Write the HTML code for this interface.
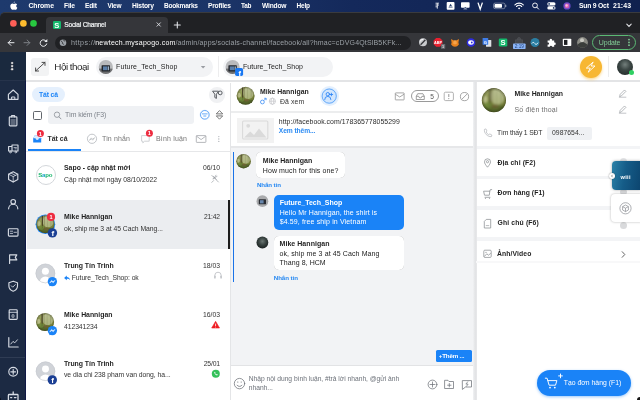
<!DOCTYPE html>
<html><head><meta charset="utf-8"><title>Social Channel</title>
<style>
*{box-sizing:border-box;margin:0;padding:0}
html,body{width:640px;height:400px;overflow:hidden;background:#fff}
body{font-family:"Liberation Sans","DejaVu Sans",sans-serif;position:relative;color:#222}
.a{position:absolute}
.t{position:absolute;white-space:nowrap;line-height:1;font-size:7px}
#root{position:absolute;left:0;top:0;width:640px;height:400px;overflow:hidden;will-change:transform}
svg{position:absolute;left:0;top:0;overflow:visible}
svg text{font-family:"Liberation Sans","DejaVu Sans",sans-serif}
</style></head><body><div id="root">
<div class="a" style="left:0px;top:0px;width:640px;height:18px;background:linear-gradient(90deg,#1e3a6d 0,#1b3467 35%,#14295b 55%,#10214f 100%)"></div>
<div class="a" style="left:0px;top:11.7px;width:640px;height:21.3px;background:#202124;border-top-left-radius:5px;border-top:.6px solid #3a3b3e"></div>
<div class="a" style="left:46px;top:16.5px;width:122px;height:17px;background:#35363a;border-radius:4px 4px 0 0"></div>
<div class="a" style="left:0px;top:33px;width:640px;height:19px;background:#35363a"></div>
<div class="a" style="left:55px;top:36px;width:355.5px;height:13.5px;background:#202124;border-radius:7px"></div>
<div class="t" style="left:28.5px;top:2px;font-size:6.90px;line-height:7px;color:#fff;font-weight:bold;letter-spacing:-0.114px;">Chrome</div>
<div class="t" style="left:64px;top:2px;font-size:6.75px;line-height:7px;color:#fff;font-weight:bold;letter-spacing:-0.207px;">File</div>
<div class="t" style="left:85px;top:2px;font-size:6.68px;line-height:7px;color:#fff;font-weight:bold;letter-spacing:-0.207px;">Edit</div>
<div class="t" style="left:107.5px;top:2px;font-size:6.47px;line-height:7px;color:#fff;font-weight:bold;letter-spacing:-0.207px;">View</div>
<div class="t" style="left:132px;top:2px;font-size:6.75px;line-height:7px;color:#fff;font-weight:bold;letter-spacing:-0.207px;">History</div>
<div class="t" style="left:164px;top:2px;font-size:6.55px;line-height:7px;color:#fff;font-weight:bold;letter-spacing:-0.207px;">Bookmarks</div>
<div class="t" style="left:208px;top:2px;font-size:6.67px;line-height:7px;color:#fff;font-weight:bold;letter-spacing:-0.207px;">Profiles</div>
<div class="t" style="left:241px;top:2px;font-size:6.41px;line-height:7px;color:#fff;font-weight:bold;letter-spacing:-0.207px;">Tab</div>
<div class="t" style="left:262px;top:2px;font-size:6.68px;line-height:7px;color:#fff;font-weight:bold;letter-spacing:-0.207px;">Window</div>
<div class="t" style="left:296.5px;top:2px;font-size:6.52px;line-height:7px;color:#fff;font-weight:bold;letter-spacing:-0.207px;">Help</div>
<div class="t" style="left:579px;top:2px;font-size:6.78px;line-height:7px;color:#fff;font-weight:bold;letter-spacing:-0.207px;">Sun 9 Oct</div>
<div class="t" style="left:613px;top:2px;font-size:6.90px;line-height:7px;color:#fff;font-weight:bold;letter-spacing:0.088px;">21:43</div>
<div class="a" style="left:52.5px;top:21px;width:8.5px;height:8.2px;background:#14b86c;border-radius:1.2px"></div>
<div class="t" style="left:54.2px;top:21px;font-size:7.60px;line-height:9px;color:#fff;font-weight:bold;">S</div>
<div class="t" style="left:64.3px;top:21px;font-size:6.58px;line-height:7px;color:#f1f3f4;letter-spacing:-0.198px;-webkit-text-stroke:.2px #f1f3f4;">Social Channel</div>
<div class="t" style="left:71px;top:39px;font-size:7.16px;line-height:8px;color:#9aa0a6;letter-spacing:0.385px;">https://</div>
<div class="t" style="left:95.2px;top:39px;font-size:7.00px;line-height:7px;color:#fff;letter-spacing:0.248px;">newtech.mysapogo.com</div>
<div class="t" style="left:175.4px;top:39px;font-size:7.00px;line-height:7px;color:#9aa0a6;letter-spacing:0.167px;">/admin/apps/socials-channel/facebook/all?hmac=cDVG4QtSlB5KFk...</div>
<div class="a" style="left:591.8px;top:35px;width:44.7px;height:14.5px;border:1px solid #5bb974;border-radius:7.5px"></div>
<div class="t" style="left:598.8px;top:39px;font-size:7.00px;line-height:7px;color:#81c995;letter-spacing:-0.175px;">Update</div>
<div class="a" style="left:0px;top:52px;width:25.8px;height:348px;background:#1c2a43"></div>
<div class="a" style="left:0px;top:52px;width:25.8px;height:28.5px;background:#1a293e"></div>
<div class="a" style="left:24.6px;top:81px;width:1.2px;height:319px;background:#0f1845"></div>
<div class="a" style="left:0px;top:80.3px;width:24.5px;height:1px;background:#26334b"></div>
<div class="a" style="left:0px;top:357px;width:24.5px;height:1px;background:#2f3c54"></div>
<div class="a" style="left:25.8px;top:80.4px;width:614.2px;height:2px;background:#e3e4e6"></div>
<div class="a" style="left:31px;top:58px;width:17.5px;height:17.5px;background:#f2f3f4;border-radius:3px"></div>
<div class="t" style="left:54.3px;top:61px;font-size:9.90px;line-height:11px;color:#2b2b2b;letter-spacing:-0.500px;">Hội thoại</div>
<div class="a" style="left:95.5px;top:56.7px;width:117.5px;height:20.3px;background:#f2f3f5;border-radius:10.2px"></div>
<div class="t" style="left:116px;top:63px;font-size:7.00px;line-height:7px;color:#1d1d1d;letter-spacing:0.156px;">Future_Tech_Shop</div>
<div class="a" style="left:218px;top:56px;width:1px;height:21px;background:#ededee"></div>
<div class="a" style="left:222.5px;top:56.7px;width:110px;height:20.3px;background:#f2f3f5;border-radius:10.2px"></div>
<div class="t" style="left:243px;top:63px;font-size:7.00px;line-height:7px;color:#1d1d1d;letter-spacing:0.056px;">Future_Tech_Shop</div>
<div class="a" style="left:579.6px;top:55.75px;width:22px;height:22px;border-radius:50%;background:#f7b733;box-shadow:0 1.5px 3px rgba(248,184,48,.55)"></div>
<div class="a" style="left:608.3px;top:56px;width:1px;height:21px;background:#ececec"></div>
<div class="a" style="left:617px;top:59px;width:16px;height:16px;border-radius:50%;background:radial-gradient(circle at 50% 35%,#737f7c 0,#3c4745 40%,#1c2322 100%)"></div>
<div class="a" style="left:629.4px;top:70.1px;width:5px;height:5px;border-radius:50%;background:#2fd062"></div>
<div class="a" style="left:229.9px;top:83px;width:1.3px;height:317px;background:#e4e5e7"></div>
<div class="a" style="left:32px;top:87px;width:32.5px;height:15px;background:#e5f0fd;border-radius:7.5px"></div>
<div class="t" style="left:39px;top:91px;font-size:6.80px;line-height:7px;color:#1a83f7;font-weight:bold;letter-spacing:-0.131px;">Tất cả</div>
<div class="a" style="left:209.1px;top:87px;width:15.6px;height:15.6px;border-radius:50%;background:#f0f1f3"></div>
<div class="a" style="left:33px;top:111px;width:8.7px;height:8.7px;border:1px solid #62666c;border-radius:1.6px;background:#fff"></div>
<div class="a" style="left:48px;top:106px;width:146px;height:18px;background:#eff1f4;border-radius:3px"></div>
<div class="t" style="left:65px;top:111px;font-size:6.90px;line-height:7px;color:#7b8088;letter-spacing:-0.136px;">Tìm kiếm (F3)</div>
<div class="t" style="left:47.5px;top:135px;font-size:6.90px;line-height:7px;color:#2f2f2f;font-weight:bold;letter-spacing:0.011px;">Tất cả</div>
<div class="t" style="left:102px;top:135px;font-size:7.00px;line-height:7px;color:#777;letter-spacing:0.145px;">Tin nhắn</div>
<div class="t" style="left:156px;top:135px;font-size:7.00px;line-height:7px;color:#777;letter-spacing:0.178px;">Bình luận</div>
<div class="a" style="left:26px;top:150.6px;width:204.5px;height:1px;background:#e6e7e9"></div>
<div class="a" style="left:28px;top:149.3px;width:52.5px;height:1.8px;background:#1a83f7"></div>
<div class="a" style="left:26.5px;top:200px;width:203px;height:48.8px;background:#ebedf0"></div>
<div class="a" style="left:228.3px;top:200px;width:1.8px;height:48.8px;background:#1c1c1c"></div>
<div class="a" style="left:35.6px;top:165px;width:20px;height:20px;border-radius:50%;background:#fff;border:1px solid #d3d6da"></div>
<div class="t" style="left:64px;top:164px;font-size:6.90px;line-height:7px;color:#1f1f1f;font-weight:bold;letter-spacing:0.014px;">Sapo - cập nhật mới</div>
<div class="t" style="left:64px;top:176px;font-size:6.80px;line-height:7px;color:#333;letter-spacing:-0.025px;">Cập nhật mới ngày 08/10/2022</div>
<div class="t" style="left:203px;top:164px;font-size:6.80px;line-height:7px;color:#333;">06/10</div>
<div class="t" style="left:64px;top:213px;font-size:6.90px;line-height:7px;color:#1f1f1f;font-weight:bold;letter-spacing:-0.016px;">Mike Hannigan</div>
<div class="t" style="left:64px;top:225px;font-size:6.80px;line-height:7px;color:#333;letter-spacing:-0.025px;">ok, ship me 3 at 45 Cach Mang...</div>
<div class="t" style="left:204px;top:213px;font-size:6.72px;line-height:7px;color:#333;letter-spacing:-0.204px;">21:42</div>
<div class="t" style="left:64px;top:262px;font-size:6.90px;line-height:7px;color:#1f1f1f;font-weight:bold;letter-spacing:-0.036px;">Trung Tín Trinh</div>
<div class="t" style="left:71.8px;top:274px;font-size:6.80px;line-height:7px;color:#333;letter-spacing:-0.075px;">Future_Tech_Shop: ok</div>
<div class="t" style="left:203px;top:262px;font-size:6.80px;line-height:7px;color:#333;">18/03</div>
<div class="t" style="left:64px;top:311px;font-size:6.90px;line-height:7px;color:#1f1f1f;font-weight:bold;letter-spacing:-0.016px;">Mike Hannigan</div>
<div class="t" style="left:64px;top:323px;font-size:6.80px;line-height:7px;color:#333;letter-spacing:-0.067px;">412341234</div>
<div class="t" style="left:203px;top:311px;font-size:6.80px;line-height:7px;color:#333;">16/03</div>
<div class="t" style="left:64px;top:360px;font-size:6.90px;line-height:7px;color:#1f1f1f;font-weight:bold;letter-spacing:-0.036px;">Trung Tín Trinh</div>
<div class="t" style="left:64px;top:371px;font-size:6.80px;line-height:7px;color:#333;letter-spacing:-0.031px;">ve dia chi 238 pham van dong, ha...</div>
<div class="t" style="left:203.8px;top:360px;font-size:6.80px;line-height:7px;color:#333;letter-spacing:-0.204px;">25/01</div>
<div class="a" style="left:231.2px;top:147.5px;width:241.8px;height:218px;background:#f2f3f5"></div>
<div class="a" style="left:231.2px;top:110.7px;width:241.8px;height:2px;background:#ecedee"></div>
<div class="a" style="left:231.2px;top:146px;width:241.8px;height:2.2px;background:#e6e7e9"></div>
<div class="a" style="left:231.2px;top:365px;width:241.8px;height:1px;background:#e2e3e5"></div>
<div class="a" style="left:473px;top:82.4px;width:3.8px;height:317.6px;background:linear-gradient(90deg,#f1f2f4 0,#e6e7e9 40%,#e1e2e4 75%,#ececee 100%)"></div>
<div class="t" style="left:260px;top:88px;font-size:6.90px;line-height:7px;color:#1f1f1f;font-weight:bold;letter-spacing:0.009px;">Mike Hannigan</div>
<div class="t" style="left:280px;top:98px;font-size:6.90px;line-height:7px;color:#333;letter-spacing:0.105px;">Đã xem</div>
<div class="a" style="left:319.7px;top:86.3px;width:19.6px;height:19.6px;border-radius:50%;background:#e4f0fe"></div>
<div class="a" style="left:321.7px;top:88.3px;width:15.6px;height:15.6px;border-radius:50%;background:#d2e6fd"></div>
<div class="a" style="left:411px;top:90.3px;width:27.7px;height:12.2px;border:.7px solid #9a9a9a;border-radius:6.1px"></div>
<div class="t" style="left:430.3px;top:93px;font-size:6.60px;line-height:7px;color:#555;">5</div>
<div class="a" style="left:237.4px;top:118px;width:36.5px;height:24.5px;background:#f2f2f2"></div>
<div class="t" style="left:278.8px;top:118px;font-size:6.90px;line-height:7px;color:#2b2b2b;letter-spacing:0.044px;">http://facebook.com/178365778055299</div>
<div class="t" style="left:278.8px;top:127px;font-size:6.70px;line-height:7px;color:#2a8af3;font-weight:bold;letter-spacing:-0.091px;">Xem thêm...</div>
<div class="a" style="left:232.85px;top:152px;width:1.1px;height:129.5px;background:#1a73e8"></div>
<div class="a" style="left:256px;top:152.3px;width:88.5px;height:26px;background:#fff;border-radius:5px;box-shadow:0 0 .6px rgba(0,0,0,.35)"></div>
<div class="t" style="left:262.8px;top:157px;font-size:7.00px;line-height:7px;color:#1f1f1f;font-weight:bold;">Mike Hannigan</div>
<div class="t" style="left:262.8px;top:167px;font-size:7.00px;line-height:7px;color:#222;letter-spacing:0.094px;">How much for this one?</div>
<div class="t" style="left:257px;top:181px;font-size:6.20px;line-height:7px;color:#2688f2;font-weight:bold;letter-spacing:-0.114px;">Nhắn tin</div>
<div class="a" style="left:273.7px;top:195px;width:130px;height:34.5px;background:#1a83f7;border-radius:5px"></div>
<div class="t" style="left:279.7px;top:199px;font-size:7.00px;line-height:7px;color:#fff;font-weight:bold;letter-spacing:-0.019px;">Future_Tech_Shop</div>
<div class="t" style="left:279.7px;top:209px;font-size:7.00px;line-height:7px;color:#fff;letter-spacing:0.118px;">Hello Mr Hannigan, the shirt is</div>
<div class="t" style="left:279.7px;top:218px;font-size:7.00px;line-height:7px;color:#fff;letter-spacing:0.133px;">$4.59, free ship in Vietnam</div>
<div class="a" style="left:273.7px;top:235.7px;width:130px;height:34px;background:#fff;border-radius:5px;box-shadow:0 0 .6px rgba(0,0,0,.35)"></div>
<div class="t" style="left:279.5px;top:240px;font-size:7.00px;line-height:7px;color:#1f1f1f;font-weight:bold;letter-spacing:0.050px;">Mike Hannigan</div>
<div class="t" style="left:279.5px;top:250px;font-size:7.00px;line-height:7px;color:#222;letter-spacing:0.111px;">ok, ship me 3 at 45 Cach Mang</div>
<div class="t" style="left:279.5px;top:259px;font-size:7.00px;line-height:7px;color:#222;letter-spacing:0.062px;">Thang 8, HCM</div>
<div class="t" style="left:273.8px;top:274px;font-size:6.20px;line-height:7px;color:#2688f2;font-weight:bold;letter-spacing:-0.085px;">Nhắn tin</div>
<div class="a" style="left:435.8px;top:350px;width:36px;height:12.2px;background:#1a83f7;border-radius:1.5px"></div>
<div class="t" style="left:438.8px;top:352px;font-size:6.20px;line-height:7px;color:#fff;font-weight:bold;letter-spacing:-0.168px;">+Thêm ...</div>
<div class="t" style="left:248.7px;top:375px;font-size:6.70px;line-height:7px;color:#6b7078;letter-spacing:-0.010px;">Nhập nội dung bình luận, #trả lời nhanh, @gửi ảnh</div>
<div class="t" style="left:248.7px;top:384px;font-size:6.70px;line-height:7px;color:#6b7078;letter-spacing:0.012px;">nhanh...</div>
<div class="a" style="left:476.6px;top:146.3px;width:164px;height:3px;background:#f3f4f6"></div>
<div class="a" style="left:476.6px;top:176.3px;width:164px;height:3.2px;background:#f3f4f6"></div>
<div class="a" style="left:476.6px;top:206.3px;width:164px;height:3.6px;background:#f3f4f6"></div>
<div class="a" style="left:476.6px;top:237px;width:164px;height:3.5px;background:#f3f4f6"></div>
<div class="a" style="left:476px;top:261px;width:164px;height:1.5px;background:#f8f8f9"></div>
<div class="t" style="left:514.5px;top:90px;font-size:6.90px;line-height:7px;color:#1f1f1f;font-weight:bold;letter-spacing:-0.016px;">Mike Hannigan</div>
<div class="t" style="left:514.5px;top:106px;font-size:7.00px;line-height:7px;color:#6e6e6e;letter-spacing:0.178px;">Số điện thoại</div>
<div class="t" style="left:497px;top:129px;font-size:6.80px;line-height:7px;color:#333;letter-spacing:-0.162px;">Tìm thấy 1 SĐT</div>
<div class="a" style="left:547px;top:127px;width:45px;height:13.3px;background:#eff1f4;border-radius:2px"></div>
<div class="t" style="left:552px;top:129px;font-size:6.80px;line-height:7px;color:#333;letter-spacing:0.040px;">0987654...</div>
<div class="t" style="left:497.5px;top:159px;font-size:6.80px;line-height:7px;color:#1f1f1f;font-weight:bold;letter-spacing:0.123px;">Địa chỉ (F2)</div>
<div class="t" style="left:497.5px;top:189px;font-size:6.80px;line-height:7px;color:#1f1f1f;font-weight:bold;letter-spacing:0.051px;">Đơn hàng (F1)</div>
<div class="t" style="left:497.5px;top:219px;font-size:6.80px;line-height:7px;color:#1f1f1f;font-weight:bold;letter-spacing:0.149px;">Ghi chú (F6)</div>
<div class="t" style="left:497px;top:250px;font-size:6.80px;line-height:7px;color:#1f1f1f;font-weight:bold;letter-spacing:0.100px;">Ảnh/Video</div>
<div class="a" style="left:619.5px;top:157.5px;width:7px;height:7px;border-radius:50%;background:#e4e5e7"></div>
<div class="a" style="left:619.5px;top:221.5px;width:7px;height:7px;border-radius:50%;background:#d9dadc"></div>
<div class="a" style="left:619.5px;top:189px;width:7px;height:6px;border-radius:50%;background:#d9dadc"></div>
<div class="a" style="left:611.7px;top:161px;width:29px;height:28.5px;background:linear-gradient(100deg,#2c82a8 0,#155c88 45%,#0c446e 100%);border-radius:4px 0 0 4px;box-shadow:0 0 3px rgba(0,0,0,.35)"></div>
<div class="t" style="left:620.5px;top:174px;font-size:5.67px;line-height:6px;color:#fff;font-weight:bold;letter-spacing:0.286px;">wiii</div>
<div class="a" style="left:608.6px;top:172.8px;width:6.4px;height:6.4px;border-radius:50%;background:#fff;box-shadow:0 0 1.5px rgba(0,0,0,.5)"></div>
<div class="a" style="left:611.3px;top:193.8px;width:29.5px;height:28.6px;background:#fff;border-radius:4px 0 0 4px;box-shadow:0 0 2.5px rgba(0,0,0,.3)"></div>
<div class="a" style="left:537px;top:370px;width:93.8px;height:26.3px;background:#1a83f7;border-radius:13.2px;box-shadow:0 1px 3px rgba(26,131,247,.45)"></div>
<div class="t" style="left:563.8px;top:379px;font-size:6.80px;line-height:7px;color:#fff;letter-spacing:0.031px;">Tạo đơn hàng (F1)</div>
<div class="a" style="left:637.2px;top:397.2px;width:10px;height:10px;background:#151515;border-radius:3px"></div>
<div class="a" style="left:-8.6px;top:397.2px;width:10px;height:10px;background:#0c0f18;border-radius:3px"></div>
<svg width="640" height="400" viewBox="0 0 640 400">
<defs>
<radialGradient id="forest" cx="0.55" cy="0.45" r="0.6">
<stop offset="0" stop-color="#b7bd7c"/><stop offset="0.35" stop-color="#7f8a4a"/><stop offset="0.75" stop-color="#4a5228"/><stop offset="1" stop-color="#2e3018"/>
</radialGradient>
<radialGradient id="darkav" cx="0.5" cy="0.4" r="0.6">
<stop offset="0" stop-color="#6b7673"/><stop offset="0.5" stop-color="#3a4442"/><stop offset="1" stop-color="#1a2020"/>
</radialGradient>
<linearGradient id="forestbg" x1="0" y1="0" x2="0" y2="1"><stop offset="0" stop-color="#a6ad78"/><stop offset="0.55" stop-color="#869042"/><stop offset="1" stop-color="#526326"/></linearGradient>
<radialGradient id="vign" cx="0.5" cy="0.5" r="0.5"><stop offset="0.75" stop-color="#2a2a10" stop-opacity="0"/><stop offset="0.94" stop-color="#2a2a10" stop-opacity=".3"/><stop offset="1" stop-color="#1c1c0c" stop-opacity=".65"/></radialGradient>
<filter id="blur" x="-10%" y="-10%" width="120%" height="120%"><feGaussianBlur stdDeviation="0.45"/></filter>
<linearGradient id="msgr" x1="0" y1="1" x2="1" y2="0"><stop offset="0" stop-color="#0a7cff"/><stop offset="1" stop-color="#2f8bff"/></linearGradient>
</defs>
<g fill="#fff"><path d="M13.6 3.1c.1-.7.6-1.3 1.2-1.5 .1.7-.5 1.4-1.2 1.5z"/><path d="M10.3 6.2c0-1.6 1.1-2.6 2.2-2.6.6 0 1 .3 1.4.3s.8-.35 1.5-.35c.6 0 1.3.3 1.7.95-1.3.8-1.1 2.7.2 3.2-.3.9-1 2.1-1.9 2.1-.5 0-.8-.3-1.4-.3s-.9.3-1.4.3c-1 0-2.3-2-2.3-3.600z"/></g>
<g fill="none" stroke="#fff" stroke-width=".8"><path d="M435.5 3.2h3.5M435.5 5h3.5M435.5 6.800h2M437.3 3.200v5.500"/></g>
<rect x="446.700" y="2" width="7.800" height="7.800" rx="1" fill="#fff"/><path d="M450.600 3.700l2.100 3.800h-4.200z" fill="#1c3767"/><path d="M449.300 6.600h2.600" stroke="#fff" stroke-width=".7"/>
<g fill="#fff"><rect x="461" y="2.300" width="8.600" height="5.400" rx=".8"/><path d="M463.300 9.300l2-1.800 2 1.800z"/></g><path d="M465.300 7l1.600 1.500h-3.200z" fill="#1c3767"/>
<path d="M478 2.600l2.200 6.600L482.400 2.600" fill="none" stroke="#fff" stroke-width="1.300"/>
<rect x="493.500" y="3.100" width="11.500" height="5.600" rx="1.600" fill="none" stroke="#fff" stroke-opacity=".55" stroke-width=".7"/><rect x="494.500" y="4.100" width="7.500" height="3.600" rx=".8" fill="#fff"/><path d="M505.800 4.800v2.200" stroke="#fff" stroke-opacity=".6" stroke-width=".9"/>
<g fill="none" stroke="#fff" stroke-width="1.100" stroke-linecap="round"><path d="M514.900 4.800a6.200 6.200 0 0 1 8.400 0"/><path d="M516.500 6.500a3.800 3.800 0 0 1 5.200 0"/></g><circle cx="519.100" cy="8.300" r=".9" fill="#fff"/>
<circle cx="535" cy="5.400" r="2.400" fill="none" stroke="#fff" stroke-width=".9"/><path d="M536.800 7.200l1.800 1.900" stroke="#fff" stroke-width="1" stroke-linecap="round"/>
<g><rect x="547.300" y="2.300" width="8.200" height="3.200" rx="1.600" fill="#fff"/><rect x="547.300" y="6.300" width="8.200" height="3.200" rx="1.600" fill="#fff"/><circle cx="549.100" cy="3.900" r=".9" fill="#1c3767"/><circle cx="553.700" cy="7.900" r=".9" fill="#1c3767"/></g>
<circle cx="567" cy="5.900" r="3.600" fill="#6d4bc9"/><circle cx="567" cy="5.900" r="2.300" fill="#d65db1"/><circle cx="566.600" cy="5.500" r="1.200" fill="#f5c3e0"/>
<circle cx="13.400" cy="23.400" r="3.300" fill="#fe5f57"/><circle cx="23.400" cy="23.400" r="3.300" fill="#febc2e"/><circle cx="33.500" cy="23.400" r="3.300" fill="#28c840"/>
<g stroke="#dfe1e5" stroke-width=".9" fill="none" stroke-linecap="round"><path d="M157 22.800l3.400 3.400M160.400 22.800l-3.400 3.400"/><path d="M174.300 25h6M177.300 22v6" stroke-width="1.100"/><path d="M626.800 24.200l2.200 2.200 2.200-2.200" stroke-width="1.100"/></g>
<g stroke="#e8eaed" stroke-width="1" fill="none" stroke-linecap="round" stroke-linejoin="round"><path d="M14 42.700H8.200M10.900 40l-2.700 2.700 2.700 2.700"/></g>
<g stroke="#7d8186" stroke-width="1" fill="none" stroke-linecap="round" stroke-linejoin="round"><path d="M24 42.700h5.800M27.100 40l2.700 2.700-2.700 2.700"/></g>
<g stroke="#e8eaed" stroke-width="1" fill="none" stroke-linecap="round"><path d="M46.300 41.300a3.300 3.300 0 1 0 .4 2.600"/></g><path d="M47.300 39v3h-3z" fill="#e8eaed"/>
<circle cx="63" cy="42.700" r="3.300" fill="#9aa0a6"/><path d="M61 41.200c1 .2 1.600.8 1.400 1.700s.6 1.200 1.500 1.400M63.500 39.700c0 1 .8 1.300 1.800 1.300" stroke="#202124" stroke-width=".8" fill="none"/>
<circle cx="423" cy="42.300" r="4" fill="#c9cbce"/><path d="M420.600 44.800l4.800-5" stroke="#35363a" stroke-width="1.300"/><path d="M420.200 41.500a3 3 0 0 1 3-2.200" stroke="#fff" stroke-width=".9" fill="none"/>
<path d="M436.200 37.900h3.700l2.600 2.600v3.700l-2.600 2.600h-3.700l-2.600-2.600v-3.700z" fill="#e8202f"/><text x="438.050" y="44" font-size="3.800" font-weight="bold" fill="#fff" text-anchor="middle">ABP</text><rect x="441" y="44" width="4.200" height="4.800" rx=".6" fill="#6b6e73"/><text x="443.100" y="48.100" font-size="3.800" fill="#fff" text-anchor="middle">1</text>
<path d="M451 39l2.800 1.600h2.400L459 39l-.6 3.600.5 1.800-1.800 1.800-2.100.5-2.100-.5-1.800-1.800.5-1.800z" fill="#e8821e"/><path d="M453.800 40.600h2.400l.8 2.800-2 1.200-2-1.200z" fill="#f5a34a"/>
<circle cx="471" cy="42.500" r="4.300" fill="#2d2be0"/><ellipse cx="471" cy="42.500" rx="2.800" ry="2.200" fill="#fff"/><circle cx="471.800" cy="42.500" r=".9" fill="#2d2be0"/>
<rect x="486" y="40" width="5.300" height="6.800" rx=".6" fill="#dfe2e6"/><rect x="482.600" y="38" width="5.600" height="6.800" rx=".6" fill="#3f7de8"/><text x="485.400" y="43.500" font-size="4.200" font-weight="bold" fill="#fff" text-anchor="middle">G</text>
<rect x="498.800" y="38.600" width="8.500" height="7.800" rx="1.200" fill="#14b86c"/><text x="503.050" y="45.300" font-size="7.600" font-weight="bold" fill="#fff" text-anchor="middle">S</text>
<path d="M515.500 39.800h7v4h-7zM517.500 39.800v-.8a1.500 1.500 0 0 1 3 0v.8" fill="#45474c" stroke="#55585d" stroke-width=".6"/><rect x="513" y="43.400" width="12.600" height="5.600" rx=".8" fill="#8ab4f8"/><text x="519.300" y="48" font-size="4.600" fill="#24437a" text-anchor="middle">2:19</text>
<circle cx="535" cy="42.500" r="4.500" fill="#2b7ea3"/><path d="M531.800 43.500c1-1.400 2-1.400 3 0s2.200 1 3.200-.8" stroke="#e8f4fa" stroke-width="1" fill="none"/>
<path d="M547.600 40.400h2.100a1.200 1.200 0 1 1 2.300 0h2.200v2.100a1.200 1.200 0 1 1 0 2.300v2h-2.100a1.100 1.100 0 1 0-2.300 0h-2.200v-2.200a1.100 1.100 0 1 0 0-2.100z" fill="#fff"/>
<rect x="562.800" y="38.700" width="8.500" height="7.400" rx=".8" fill="#fff"/><rect x="564" y="39.900" width="3.400" height="5" fill="#202124"/>
<circle cx="582.500" cy="42.500" r="5.400" fill="#8a8a84"/><path d="M577.500 44.500a5.400 5.400 0 0 0 10 0c-2-1-3-2.500-5-2.500s-3.500 1.500-5 2.500z" fill="#3a3d3b"/><circle cx="582" cy="40.200" r="2" fill="#c9c9c2"/>
<g fill="#81c995"><circle cx="629" cy="39.600" r=".9"/><circle cx="629" cy="42.400" r=".9"/><circle cx="629" cy="45.200" r=".9"/></g>
<g fill="#fff" stroke="#0c1320" stroke-width=".5"><circle cx="12.100" cy="63" r="1.350"/><circle cx="12.100" cy="66.100" r="1.350"/><circle cx="12.100" cy="69.200" r="1.350"/></g>
<g fill="none" stroke="#d6dbe4" stroke-width="1.150" stroke-linejoin="round" stroke-linecap="round">
<path d="M8.400 94.400L13.200 90l4.800 4.400v4.900H8.400z"/><path d="M11.600 99.300v-2.300h3.200v2.300" stroke-width="1"/>
<rect x="9.300" y="116.800" width="7.600" height="9" rx=".8"/><path d="M11.600 116.800v-1.300h3v1.300" /><path d="M11 120h4.200M11 122h4.200M11 124h4.200" stroke-width=".7"/>
<path d="M12 145h6v6h-6zM12 146.500H8.600v4.500H12"/><path d="M14 147.500h2.400M15 148.800h1.400" stroke-width=".7"/><circle cx="10.400" cy="152" r=".9" stroke-width=".8"/><circle cx="15.800" cy="152" r=".9" stroke-width=".8"/>
<path d="M13.200 171.800l4.600 2.400v5.400l-4.600 2.400-4.600-2.400v-5.400z"/><path d="M8.600 174.200l4.600 2.400 4.600-2.400M13.200 176.600v5.400M10.900 173l4.600 2.400" stroke-width=".8"/>
<circle cx="13.200" cy="201.800" r="2.300"/><path d="M8.600 208.800a4.600 4.600 0 0 1 9.200 0"/>
<rect x="8.400" y="228.700" width="9.600" height="7.400" rx=".8"/><path d="M10.300 231.200h2.300M10.300 233.400h2.300M14 232.300h2.500" stroke-width=".8"/>
<path d="M9.600 263.500v-8.600h7.200l-1.500 2.500 1.500 2.500H9.600"/>
<path d="M13.200 281.200l4.300 1.500v3.200c0 2.600-1.800 4.300-4.300 5.300-2.500-1-4.300-2.700-4.300-5.300v-3.200z"/><path d="M11.300 285.800l1.400 1.400 2.600-2.600" stroke-width=".9"/>
<rect x="9.200" y="309.700" width="8" height="9.600" rx=".8"/><path d="M9.200 312.300h8" stroke-width=".9"/><path d="M12.400 314.800h1.600v2.400h-1.600z" stroke-width=".7"/>
<path d="M8.800 337.600v9.400h9.400"/><path d="M10.800 344l2.200-2.600 1.800 1.400 2.600-3" stroke-width=".9"/>
<circle cx="13.200" cy="371.800" r="4.400"/><path d="M13.200 369.400v4.800M10.800 371.800h4.800"/>
<rect x="8.400" y="394.500" width="9.600" height="7" rx=".8" stroke-width="1.300"/><path d="M13.200 394.300v-2.300" stroke-width="1.300"/><path d="M10.600 397.600h1.200M14.400 397.600h1.600" stroke-width="1.200"/>
</g>
<g stroke="#3c3c3c" stroke-width=".9" fill="none" stroke-linecap="round" stroke-linejoin="round"><path d="M35.600 71l9.400-8.600M35.600 68v3h3M42 62.400h3v3"/></g>
<g><circle cx="105.8" cy="67" r="7.1" fill="#b9babc"/><clipPath id="s105"><circle cx="105.8" cy="67" r="7.1"/></clipPath><g clip-path="url(#s105)"><rect x="98.7" y="68.6" width="14.2" height="7.1" fill="#6f7072"/><rect x="101.6" y="65.2" width="8.400" height="6.200" rx=".6" fill="#23262b"/><rect x="103.0" y="66.4" width="4.400" height="3.800" fill="#5c7fa8"/><rect x="107.8" y="66.4" width="1.300" height="3.800" fill="#9fb3c8"/></g></g>
<g><circle cx="232.6" cy="67" r="7.1" fill="#b9babc"/><clipPath id="s232"><circle cx="232.6" cy="67" r="7.1"/></clipPath><g clip-path="url(#s232)"><rect x="225.5" y="68.6" width="14.2" height="7.1" fill="#6f7072"/><rect x="228.4" y="65.2" width="8.400" height="6.200" rx=".6" fill="#23262b"/><rect x="229.79999999999998" y="66.4" width="4.400" height="3.800" fill="#5c7fa8"/><rect x="234.6" y="66.4" width="1.300" height="3.800" fill="#9fb3c8"/></g></g>
<path d="M200.800 66l2.300 2.400 2.300-2.400z" fill="#9a9da3"/>
<rect x="235.100" y="68" width="8" height="7.900" rx="1.700" fill="#1877f2"/><text x="239.700" y="75.700" font-size="7.600" font-weight="bold" fill="#fff" text-anchor="middle">f</text>
<path d="M593.200 62L586.300 68.100H590.300L588.200 72.200L595 66H591Z" fill="none" stroke="#fff" stroke-width=".9" stroke-linejoin="round"/>
<g stroke="#4a4d52" stroke-width=".9" fill="none" stroke-linejoin="round"><path d="M212.600 91.200h6l-2.200 3v4.200l-1.600-.9v-3.300z"/><circle cx="220.200" cy="92.900" r="1.900" fill="#f0f1f3"/></g>
<circle cx="57" cy="114.700" r="2.700" fill="none" stroke="#8a8f96" stroke-width=".8"/><path d="M59 116.800l2 2.100" stroke="#8a8f96" stroke-width=".9" stroke-linecap="round"/>
<circle cx="204.800" cy="114.800" r="5.300" fill="#e6f1fe"/><circle cx="204.800" cy="114.800" r="4.300" fill="#fff" stroke="#4a9af5" stroke-width=".85"/><path d="M202.400 113.900h4.800M203.700 116h2.200" stroke="#4a9af5" stroke-width=".85" stroke-linecap="round"/>
<g stroke="#555" stroke-width=".8" fill="none" stroke-linejoin="round"><path d="M216.300 113.900l3.200-3.300 3.200 3.300zM216.300 115.900l3.200 3.300 3.200-3.300z"/></g>
<path d="M33.200 138.200l1.700-3h4.600l1.700 3v4.200h-8z" fill="#1a83f7"/><path d="M33.200 138.200h2.300a1.700 1.700 0 0 0 3.400 0h2.300l-1.700-3h-4.600z" fill="#fff" opacity=".85"/>
<g><circle cx="40.4" cy="133.6" r="3.5" fill="#ee2d41"/><text x="40.4" y="135.6" font-size="5.6" font-weight="bold" fill="#fff" text-anchor="middle">1</text></g>
<circle cx="92" cy="138.800" r="4.600" fill="none" stroke="#b4b7bc" stroke-width=".8"/><path d="M89.400 140.300l1.900-2.400 1.300 1.300 2-1.500-1.900 2.500-1.300-1.300z" fill="none" stroke="#b4b7bc" stroke-width=".7" stroke-linejoin="round"/>
<path d="M141.600 135.600h7.600v5.600h-4.600l-1.800 1.700v-1.700h-1.200z" fill="none" stroke="#c3c5c9" stroke-width=".8" stroke-linejoin="round"/>
<g><circle cx="149.4" cy="133.2" r="3.5" fill="#ee2d41"/><text x="149.4" y="135.2" font-size="5.6" font-weight="bold" fill="#fff" text-anchor="middle">1</text></g>
<g stroke="#a3a6ab" stroke-width=".8" fill="none"><rect x="196.300" y="135.600" width="9.600" height="6.800" rx=".6"/><path d="M196.300 136l4.800 3.600 4.800-3.600"/></g>
<g fill="#b5b8bd"><circle cx="218.800" cy="136.600" r=".7"/><circle cx="218.800" cy="139" r=".7"/><circle cx="218.800" cy="141.400" r=".7"/></g>
<text x="45.300" y="177.100" font-size="6.100" font-weight="bold" text-anchor="middle" letter-spacing="-.15"><tspan fill="#18b56b">S</tspan><tspan fill="#1aa3c8">a</tspan><tspan fill="#18b56b">po</tspan></text>
<g stroke="#9a9da3" stroke-width=".7" fill="none" stroke-linecap="round"><path d="M213.400 176.400l3 3M216 175.200l-2.400 3.800M217 176.400l-4 2.200M213.600 180.600l-1.800 1.800M211.800 175.400l6.600 6.600"/></g>
<g><circle cx="45.4" cy="224.2" r="9.8" fill="#1a83f7"/><filter id="bc454_2242" x="-10%" y="-10%" width="120%" height="120%"><feGaussianBlur stdDeviation="0.77"/></filter><clipPath id="c454_2242"><circle cx="45.4" cy="224.2" r="9.0"/></clipPath><g clip-path="url(#c454_2242)"><g filter="url(#bc454_2242)"><rect x="34.6" y="213.39999999999998" width="21.599999999999998" height="21.599999999999998" fill="url(#forestbg)"/><ellipse cx="48.10" cy="221.50" rx="5.40" ry="5.85" fill="#c9cfa8" opacity=".6"/><ellipse cx="38.92" cy="223.75" rx="1.80" ry="2.70" fill="#d3d4ac" opacity=".6"/><rect x="41.80" y="213.39999999999998" width="1.26" height="15.30" fill="#453d24" opacity="0.9"/><rect x="44.01" y="213.39999999999998" width="0.63" height="15.30" fill="#5b5632" opacity="0.5"/><rect x="47.11" y="213.39999999999998" width="0.54" height="15.30" fill="#666a3c" opacity="0.3"/><rect x="50.53" y="213.39999999999998" width="0.90" height="15.30" fill="#5a6236" opacity="0.3"/><ellipse cx="46.30" cy="231.85" rx="9.90" ry="4.05" fill="#52642a" opacity=".85"/><ellipse cx="40.90" cy="227.80" rx="3.15" ry="2.25" fill="#6f8a3a" opacity=".7"/><ellipse cx="46.30" cy="228.70" rx="2.70" ry="1.26" fill="#7a5f38" opacity=".6"/></g><circle cx="45.4" cy="224.2" r="9.0" fill="url(#vign)"/></g></g>
<g><circle cx="51" cy="216.9" r="4.1" fill="#ee2d41"/><text x="51" y="218.9" font-size="5.6" font-weight="bold" fill="#fff" text-anchor="middle">1</text></g>
<g><circle cx="52.4" cy="232.9" r="4.7" fill="#1b3f94"/><text x="52.8" y="236.20000000000002" font-size="8" font-weight="bold" fill="#fff" text-anchor="middle">f</text></g>
<g><circle cx="45.4" cy="273.4" r="9.75" fill="#d0d3d8"/><clipPath id="p454_2734"><circle cx="45.4" cy="273.4" r="9.75"/></clipPath><g clip-path="url(#p454_2734)"><circle cx="45.4" cy="271.25" r="3.51" fill="#fff"/><ellipse cx="45.4" cy="282.66" rx="6.04" ry="6.04" fill="#fff"/></g><circle cx="45.4" cy="273.4" r="9.45" fill="none" stroke="#c4c8ce" stroke-width=".6"/></g>
<g><circle cx="52.4" cy="281.6" r="4.65" fill="#1a83f7"/><path d="M49.3 286.20000000000005l.4-2.600 2 1.600z" fill="#1a83f7"/><path d="M49.699999999999996 282.90000000000003 L51.6 280.40000000000003 L53.0 281.70000000000005 L55.1 280.3 L53.199999999999996 282.8 L51.8 281.5 Z" fill="#fff" stroke="#fff" stroke-width=".4" stroke-linejoin="round"/></g>
<path d="M66.800 275.600l-2.700 2.300 2.700 2.300v-1.500c1.500 0 2.500.4 3.200 1.400-.2-1.900-1.300-3-3.200-3.100z" fill="#1a83f7"/>
<g fill="none" stroke="#c7c9cd" stroke-width="1"><path d="M214.800 277v-1.600a3.200 3.200 0 0 1 6.400 0v1.600"/></g><rect x="214" y="275.600" width="1.800" height="3" rx=".7" fill="#c7c9cd"/><rect x="220.200" y="275.600" width="1.800" height="3" rx=".7" fill="#c7c9cd"/>
<g><filter id="bc451_3220" x="-10%" y="-10%" width="120%" height="120%"><feGaussianBlur stdDeviation="0.77"/></filter><clipPath id="c451_3220"><circle cx="45.1" cy="322" r="9.05"/></clipPath><g clip-path="url(#c451_3220)"><g filter="url(#bc451_3220)"><rect x="34.24" y="311.14" width="21.720000000000002" height="21.720000000000002" fill="url(#forestbg)"/><ellipse cx="47.82" cy="319.29" rx="5.43" ry="5.88" fill="#c9cfa8" opacity=".6"/><ellipse cx="38.58" cy="321.55" rx="1.81" ry="2.72" fill="#d3d4ac" opacity=".6"/><rect x="41.48" y="311.14" width="1.27" height="15.39" fill="#453d24" opacity="0.9"/><rect x="43.70" y="311.14" width="0.63" height="15.39" fill="#5b5632" opacity="0.5"/><rect x="46.82" y="311.14" width="0.54" height="15.39" fill="#666a3c" opacity="0.3"/><rect x="50.26" y="311.14" width="0.91" height="15.39" fill="#5a6236" opacity="0.3"/><ellipse cx="46.01" cy="329.69" rx="9.96" ry="4.07" fill="#52642a" opacity=".85"/><ellipse cx="40.58" cy="325.62" rx="3.17" ry="2.26" fill="#6f8a3a" opacity=".7"/><ellipse cx="46.01" cy="326.52" rx="2.72" ry="1.27" fill="#7a5f38" opacity=".6"/></g><circle cx="45.1" cy="322" r="9.05" fill="url(#vign)"/></g></g>
<g><circle cx="52.4" cy="330.6" r="4.65" fill="#1a83f7"/><path d="M49.3 335.20000000000005l.4-2.600 2 1.600z" fill="#1a83f7"/><path d="M49.699999999999996 331.90000000000003 L51.6 329.40000000000003 L53.0 330.70000000000005 L55.1 329.3 L53.199999999999996 331.8 L51.8 330.5 Z" fill="#fff" stroke="#fff" stroke-width=".4" stroke-linejoin="round"/></g>
<path d="M215.600 321.300l3.900 6.700h-7.800z" fill="#ee1d23" stroke="#ee1d23" stroke-width=".6" stroke-linejoin="round"/><path d="M215.600 323.600v2.400" stroke="#fff" stroke-width=".8"/><circle cx="215.600" cy="327" r=".45" fill="#fff"/>
<g><circle cx="45.5" cy="371.2" r="9.65" fill="#d0d3d8"/><clipPath id="p455_3712"><circle cx="45.5" cy="371.2" r="9.65"/></clipPath><g clip-path="url(#p455_3712)"><circle cx="45.5" cy="369.08" r="3.47" fill="#fff"/><ellipse cx="45.5" cy="380.37" rx="5.98" ry="5.98" fill="#fff"/></g><circle cx="45.5" cy="371.2" r="9.35" fill="none" stroke="#c4c8ce" stroke-width=".6"/></g>
<g><circle cx="52.3" cy="379.9" r="4.7" fill="#1b3f94"/><text x="52.699999999999996" y="383.2" font-size="8" font-weight="bold" fill="#fff" text-anchor="middle">f</text></g>
<circle cx="215.800" cy="373.800" r="4" fill="#34c15a"/><path d="M214.200 372.300c.2 1.500 1.300 2.700 2.900 3.100l.7-.8-1-.6-.5.400c-.6-.3-1-.7-1.200-1.300l.4-.4-.5-1z" fill="#fff"/>
<g><filter id="bc2456_958" x="-10%" y="-10%" width="120%" height="120%"><feGaussianBlur stdDeviation="0.77"/></filter><clipPath id="c2456_958"><circle cx="245.6" cy="95.8" r="9"/></clipPath><g clip-path="url(#c2456_958)"><g filter="url(#bc2456_958)"><rect x="234.79999999999998" y="85.0" width="21.599999999999998" height="21.599999999999998" fill="url(#forestbg)"/><ellipse cx="248.30" cy="93.10" rx="5.40" ry="5.85" fill="#c9cfa8" opacity=".6"/><ellipse cx="239.12" cy="95.35" rx="1.80" ry="2.70" fill="#d3d4ac" opacity=".6"/><rect x="242.00" y="85.0" width="1.26" height="15.30" fill="#453d24" opacity="0.9"/><rect x="244.20" y="85.0" width="0.63" height="15.30" fill="#5b5632" opacity="0.5"/><rect x="247.31" y="85.0" width="0.54" height="15.30" fill="#666a3c" opacity="0.3"/><rect x="250.73" y="85.0" width="0.90" height="15.30" fill="#5a6236" opacity="0.3"/><ellipse cx="246.50" cy="103.45" rx="9.90" ry="4.05" fill="#52642a" opacity=".85"/><ellipse cx="241.10" cy="99.40" rx="3.15" ry="2.25" fill="#6f8a3a" opacity=".7"/><ellipse cx="246.50" cy="100.30" rx="2.70" ry="1.26" fill="#7a5f38" opacity=".6"/></g><circle cx="245.6" cy="95.8" r="9" fill="url(#vign)"/></g></g>
<g stroke="#3b8df5" stroke-width=".8" fill="none"><circle cx="262.400" cy="102" r="1.900"/><path d="M263.800 100.600l2.200-2.200M264.200 98.300h1.900v1.900"/></g>
<g stroke="#b9bbbf" stroke-width=".6" fill="none"><circle cx="272.400" cy="101.200" r="3.100"/><ellipse cx="272.400" cy="101.200" rx="1.400" ry="3.100"/><path d="M269.300 101.200h6.200"/></g>
<circle cx="329.200" cy="96.100" r="7.100" fill="none" stroke="#4a9bf9" stroke-width=".8"/><g stroke="#2f86f6" stroke-width=".9" fill="none" stroke-linecap="round"><circle cx="327.800" cy="94.200" r="1.700"/><path d="M324.700 99.500a3.100 3.100 0 0 1 6.200 0"/><path d="M331.400 93.200v2.600M330.100 94.500h2.600"/></g>
<g stroke="#8c8c8c" stroke-width=".75" fill="none"><rect x="395.300" y="92.900" width="8.800" height="7" rx=".4"/><path d="M395.300 94.200l4.400 2.800 4.400-2.800"/></g>
<g stroke="#777" stroke-width=".7" fill="none" stroke-linejoin="round"><path d="M416.300 96.300l1.400-2.600h5.200l1.400 2.600v3.200h-8z"/><path d="M416.300 96.300h2.400a1.600 1.600 0 0 0 3.200 0h2.400"/></g>
<rect x="444.200" y="92.200" width="9.200" height="8.400" rx="1.400" fill="none" stroke="#9a9a9a" stroke-width=".75"/><path d="M448.800 94v3" stroke="#8a8a8a" stroke-width=".9"/><circle cx="448.800" cy="98.600" r=".55" fill="#8a8a8a"/>
<circle cx="464.500" cy="96.600" r="4.100" fill="none" stroke="#8a8a8a" stroke-width=".75"/><path d="M461.700 99.400l5.600-5.600" stroke="#8a8a8a" stroke-width=".75"/>
<g fill="none" stroke="#dadada" stroke-width="1.100"><rect x="242.600" y="121" width="25.200" height="18" rx="1"/></g><circle cx="248.200" cy="125.800" r="1.900" fill="#dadada"/><path d="M244.200 137.600l6-6.200 3.800 3.600 5-6.400 7.400 9z" fill="#dadada"/>
<g><filter id="bc2436_1612" x="-10%" y="-10%" width="120%" height="120%"><feGaussianBlur stdDeviation="0.62"/></filter><clipPath id="c2436_1612"><circle cx="243.6" cy="161.2" r="7.3"/></clipPath><g clip-path="url(#c2436_1612)"><g filter="url(#bc2436_1612)"><rect x="234.84" y="152.44" width="17.52" height="17.52" fill="url(#forestbg)"/><ellipse cx="245.79" cy="159.01" rx="4.38" ry="4.75" fill="#c9cfa8" opacity=".6"/><ellipse cx="238.34" cy="160.83" rx="1.46" ry="2.19" fill="#d3d4ac" opacity=".6"/><rect x="240.68" y="152.44" width="1.02" height="12.41" fill="#453d24" opacity="0.9"/><rect x="242.47" y="152.44" width="0.51" height="12.41" fill="#5b5632" opacity="0.5"/><rect x="244.99" y="152.44" width="0.44" height="12.41" fill="#666a3c" opacity="0.3"/><rect x="247.76" y="152.44" width="0.73" height="12.41" fill="#5a6236" opacity="0.3"/><ellipse cx="244.33" cy="167.41" rx="8.03" ry="3.29" fill="#52642a" opacity=".85"/><ellipse cx="239.95" cy="164.12" rx="2.55" ry="1.82" fill="#6f8a3a" opacity=".7"/><ellipse cx="244.33" cy="164.85" rx="2.19" ry="1.02" fill="#7a5f38" opacity=".6"/></g><circle cx="243.6" cy="161.2" r="7.3" fill="url(#vign)"/></g></g>
<circle cx="262.400" cy="201.200" r="5.900" fill="#a9aaac"/><rect x="258.800" y="199.300" width="7.200" height="5" rx=".5" fill="#2a2d33"/><rect x="260" y="200.200" width="3.600" height="3.200" fill="#6887ad"/>
<circle cx="262.400" cy="242.500" r="5.900" fill="url(#darkav)"/>
<g stroke="#6d7278" stroke-width=".75" fill="none" stroke-linecap="round"><circle cx="239.500" cy="383.600" r="5.200"/><path d="M237 385.200a2.900 2.900 0 0 0 5 0"/></g><circle cx="237.800" cy="382" r=".6" fill="#6d7278"/><circle cx="241.200" cy="382" r=".6" fill="#6d7278"/>
<g stroke="#6d7278" stroke-width=".75" fill="none" stroke-linecap="round" stroke-linejoin="round"><circle cx="432.500" cy="384.500" r="4.400"/><path d="M432.500 382v5M430 384.500h5"/><path d="M445 380.300h3l1 1.200h4.500v7h-8.500z"/><path d="M449.300 383.500v3.400M447.600 385.200h3.400"/><path d="M462.700 380.600h8.800v6.400h-6l-2.800 2.200z"/><path d="M467.700 381.800l-1.800 2.300h2.200l-1.600 2.200" stroke-width=".7"/></g>
<g><filter id="bc4939_1002" x="-10%" y="-10%" width="120%" height="120%"><feGaussianBlur stdDeviation="1.03"/></filter><clipPath id="c4939_1002"><circle cx="493.9" cy="100.2" r="12.1"/></clipPath><g clip-path="url(#c4939_1002)"><g filter="url(#bc4939_1002)"><rect x="479.38" y="85.68" width="29.04" height="29.04" fill="url(#forestbg)"/><ellipse cx="497.53" cy="96.57" rx="7.26" ry="7.87" fill="#c9cfa8" opacity=".6"/><ellipse cx="485.19" cy="99.59" rx="2.42" ry="3.63" fill="#d3d4ac" opacity=".6"/><rect x="489.06" y="85.68" width="1.69" height="20.57" fill="#453d24" opacity="0.9"/><rect x="492.02" y="85.68" width="0.85" height="20.57" fill="#5b5632" opacity="0.5"/><rect x="496.20" y="85.68" width="0.73" height="20.57" fill="#666a3c" opacity="0.3"/><rect x="500.80" y="85.68" width="1.21" height="20.57" fill="#5a6236" opacity="0.3"/><ellipse cx="495.11" cy="110.48" rx="13.31" ry="5.45" fill="#52642a" opacity=".85"/><ellipse cx="487.85" cy="105.04" rx="4.23" ry="3.02" fill="#6f8a3a" opacity=".7"/><ellipse cx="495.11" cy="106.25" rx="3.63" ry="1.69" fill="#7a5f38" opacity=".6"/></g><circle cx="493.9" cy="100.2" r="12.1" fill="url(#vign)"/></g></g>
<g stroke="#9a9da2" stroke-width=".7" fill="none" stroke-linejoin="round" stroke-linecap="round"><path d="M619.7 96.19999999999999l.5-1.900 4.300-4.300 1.400 1.400-4.300 4.300z"/><path d="M619.3 97.19999999999999h6.600" stroke-width=".6"/></g>
<g stroke="#9a9da2" stroke-width=".7" fill="none" stroke-linejoin="round" stroke-linecap="round"><path d="M619.7 112.19999999999999l.5-1.900 4.300-4.300 1.400 1.400-4.300 4.300z"/><path d="M619.3 113.19999999999999h6.600" stroke-width=".6"/></g>
<path d="M484.400 129.400l1.500-.5 1.100 2.200-.9.900c.6 1.300 1.500 2.200 2.700 2.800l1-.9 2.100 1.200-.5 1.500c-3.800.4-7.500-3.300-7-7.200z" fill="none" stroke="#b0b3b8" stroke-width=".7" stroke-linejoin="round"/>
<g stroke="#8a8d92" stroke-width=".75" fill="none" stroke-linejoin="round"><path d="M487.500 167.200c-2-2.400-3-3.900-3-5.400a3 3 0 0 1 6 0c0 1.500-1 3-3 5.400z"/><circle cx="487.500" cy="161.700" r="1.100"/></g>
<g stroke="#8a8d92" stroke-width=".75" fill="none" stroke-linejoin="round" stroke-linecap="round"><path d="M491.700 189.600h-1.300l-.6 1.600h-6.200l.9 4h4.800l.5-4M485 197.300h5"/></g><circle cx="485.400" cy="198.300" r=".55" fill="#8a8d92"/><circle cx="489.400" cy="198.300" r=".55" fill="#8a8d92"/>
<g stroke="#8a8d92" stroke-width=".75" fill="none" stroke-linejoin="round"><path d="M484.300 221.400l2-2h4.400v8.600h-6.400z"/><path d="M485.800 225.600h3.400" stroke-width=".6"/></g>
<g stroke="#8a8d92" stroke-width=".75" fill="none" stroke-linejoin="round"><rect x="483.800" y="250.200" width="7.400" height="7.200" rx="1"/><path d="M484.200 256.600l2.600-2.800 1.600 1.400 2.400-1.900"/></g><circle cx="486" cy="252.300" r=".6" fill="#8a8d92"/>
<path d="M622.200 251.700l2.600 2.800-2.600 2.800" stroke="#555" stroke-width=".9" fill="none" stroke-linecap="round" stroke-linejoin="round"/>
<path d="M612.600 174.800l-1.100 1.200 1.100 1.200" stroke="#555" stroke-width=".6" fill="none"/>
<g stroke="#8a8d92" stroke-width=".7" fill="none" stroke-linejoin="round"><circle cx="625.500" cy="208.300" r="5.600"/><path d="M625.500 205l2.900 1.600v3.400l-2.900 1.600-2.900-1.600v-3.400zM622.600 206.600l2.900 1.600 2.900-1.600M625.500 208.200v3.400"/></g>
<g stroke="#fff" stroke-width=".95" fill="none" stroke-linejoin="round" stroke-linecap="round"><path d="M545.300 378.200h1.800l2 7h6.400l1.400-4.600h-9"/><path d="M560.500 374v3.800M558.600 375.900h3.800"/></g><circle cx="550" cy="387.600" r=".9" fill="#fff"/><circle cx="554.800" cy="387.600" r=".9" fill="#fff"/>
</svg>
</div></body></html>
